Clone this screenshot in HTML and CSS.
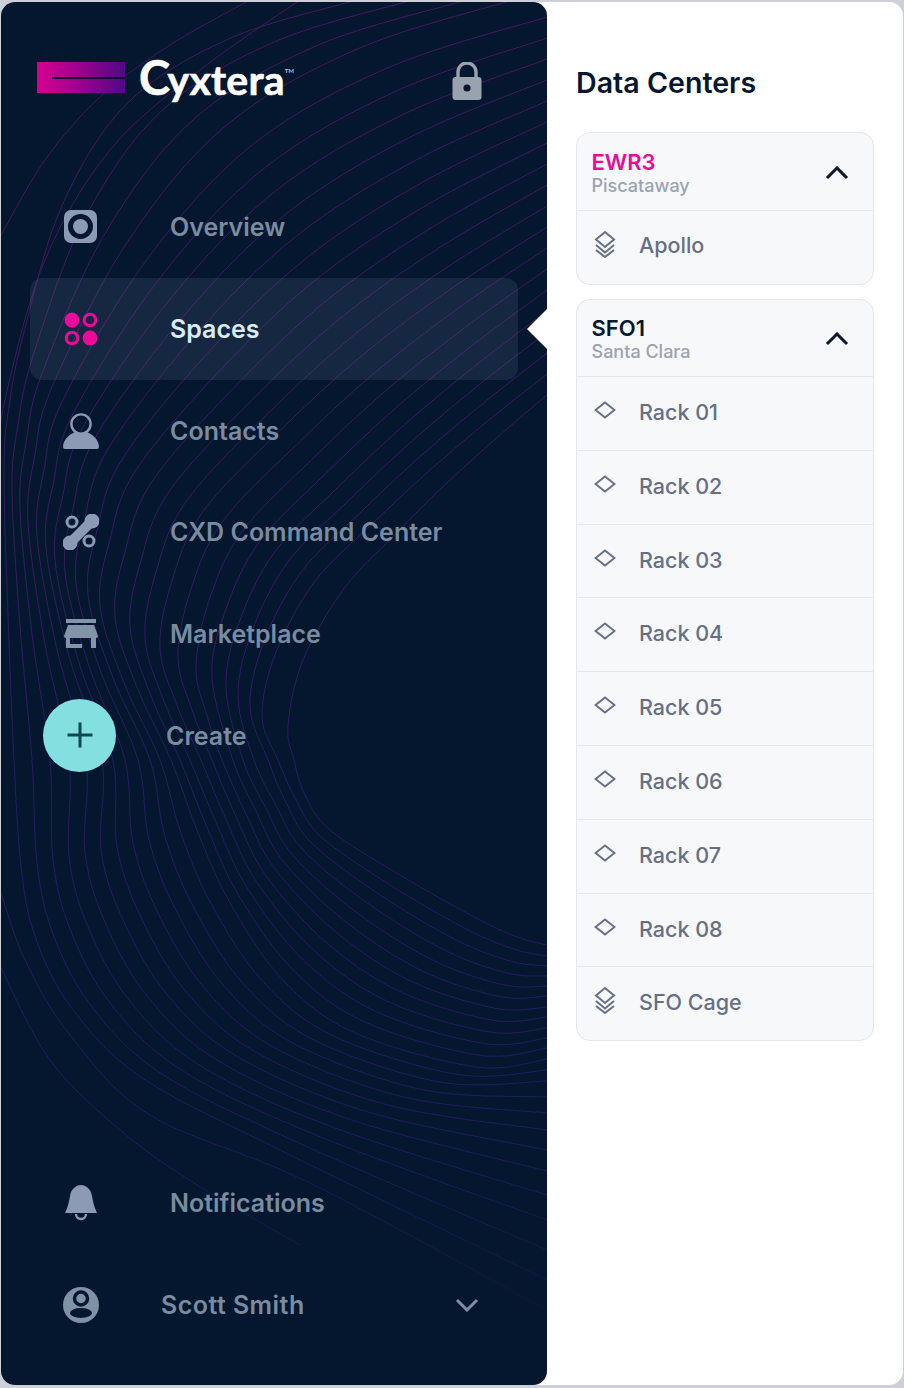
FILE: index.html
```html
<!DOCTYPE html>
<html lang="en">
<head>
<meta charset="utf-8">
<title>Cyxtera – Data Centers</title>
<link rel="stylesheet" href="styles.css">
</head>
<body>
<div class="app">
  <aside class="sidebar">
    <svg class="waves" width="546" height="1383" viewBox="1 2 546 1383" aria-hidden="true">
      <defs>
        <linearGradient id="waveStroke" gradientUnits="userSpaceOnUse" x1="0" y1="0" x2="0" y2="1300">
          <stop offset="0" stop-color="#45195c"/>
          <stop offset="0.42" stop-color="#381b5e"/>
          <stop offset="0.6" stop-color="#261d62"/>
          <stop offset="0.9" stop-color="#1d1e5c"/>
          <stop offset="1" stop-color="#0b1838"/>
        </linearGradient>
      </defs>
      <g id="waveLines" fill="none" stroke="url(#waveStroke)" stroke-width="1"></g>
    </svg>

    <header class="brand">
      <div class="logo">
        <span class="logo-mark"><span class="logo-slit"></span></span>
        <span class="logo-word"><span class="logo-initial">C</span>yxtera<sup class="logo-tm">TM</sup></span>
      </div>
      <svg class="lock" width="30" height="38" viewBox="0 0 30 38">
        <path d="M6 17V10a9 9 0 0 1 18 0v7" fill="none" stroke="#9aa1af" stroke-width="3.4"/>
        <rect x="0.5" y="15" width="29" height="23" rx="3" fill="#9aa1af"/>
        <circle cx="15" cy="26" r="3.6" fill="#05162f"/>
      </svg>
    </header>

    <nav class="nav">
      <a class="nav-item">
        <svg class="nav-icon" width="36" height="36" viewBox="0 0 36 36"><rect x="1" y="1" width="33" height="33" rx="7" fill="#8c9ab5"/><circle cx="17.5" cy="17.5" r="12.5" fill="#05162f"/><circle cx="17.5" cy="17.5" r="7.5" fill="#8c9ab5"/></svg>
        <span class="nav-label">Overview</span>
      </a>
      <a class="nav-item is-active">
        <svg class="nav-icon" width="36" height="36" viewBox="0 0 36 36"><circle cx="9" cy="9" r="7.4" fill="#ec0a9b"/><circle cx="27" cy="9" r="5.8" fill="none" stroke="#ec0a9b" stroke-width="3"/><circle cx="9" cy="27" r="5.8" fill="none" stroke="#ec0a9b" stroke-width="3"/><circle cx="27" cy="27" r="7.4" fill="#ec0a9b"/></svg>
        <span class="nav-label">Spaces</span>
      </a>
      <a class="nav-item">
        <svg class="nav-icon" width="36" height="36" viewBox="0 0 36 36"><circle cx="18" cy="11" r="9.6" fill="none" stroke="#8c9ab5" stroke-width="2.4"/><path d="M2 36a2 2 0 0 1-2-2C0 26 8 20 13 19c3 2 7 2 10 0C28 20 36 26 36 34a2 2 0 0 1-2 2Z" fill="#8c9ab5"/></svg>
        <span class="nav-label">Contacts</span>
      </a>
      <a class="nav-item">
        <svg class="nav-icon" width="36" height="36" viewBox="0 0 36 36"><path d="M7 29 29 7" stroke="#8c9ab5" stroke-width="10"/><circle cx="7" cy="29" r="7.5" fill="#8c9ab5"/><circle cx="29" cy="7" r="7.5" fill="#8c9ab5"/><circle cx="9" cy="8" r="5" fill="none" stroke="#8c9ab5" stroke-width="3"/><circle cx="26" cy="27" r="5" fill="none" stroke="#8c9ab5" stroke-width="3"/></svg>
        <span class="nav-label">CXD Command Center</span>
      </a>
      <a class="nav-item">
        <svg class="nav-icon" width="36" height="36" viewBox="0 0 36 36"><rect x="3" y="3" width="30" height="4" fill="#8494a8"/><path d="M5 9h26l4 11a2 2 0 0 1-2 2H3a2 2 0 0 1-2-2Z" fill="#8494a8"/><path d="M3 21h4v7h12v4H3ZM28 21h5v11h-5Z" fill="#8494a8"/></svg>
        <span class="nav-label">Marketplace</span>
      </a>
      <a class="nav-item nav-create">
        <span class="create-btn">
          <svg class="create-plus" width="28" height="28" viewBox="0 0 28 28"><path d="M14 1.500v25M1.500 14h25" stroke="#0b4b50" stroke-width="3"/></svg>
        </span>
        <span class="nav-label">Create</span>
      </a>
    </nav>

    <div class="nav nav-bottom">
      <a class="nav-item">
        <svg class="nav-icon" width="36" height="36" viewBox="0 0 36 36"><path d="M2 28C5 22 6 16 7 11 8 4 13 0 18 0 23 0 28 4 29 11 30 16 31 22 34 28Z" fill="#8c9ab5"/><path d="M13 29a5 5 0 0 0 10 0" fill="none" stroke="#8c9ab5" stroke-width="2.400"/></svg>
        <span class="nav-label">Notifications</span>
      </a>
      <a class="nav-item nav-user">
        <svg class="nav-icon" width="36" height="36" viewBox="0 0 36 36"><circle cx="18" cy="18" r="18" fill="#8092a6"/><circle cx="18" cy="11.500" r="6.500" fill="none" stroke="#05162f" stroke-width="3.500"/><ellipse cx="18" cy="26" rx="11" ry="5" fill="#05162f"/></svg>
        <span class="nav-label">Scott Smith</span>
        <svg class="user-caret" width="24" height="14" viewBox="0 0 24 14"><path d="M2 2l10 10L22 2" fill="none" stroke="#7f8ea3" stroke-width="3"/></svg>
      </a>
    </div>
  </aside>

  <main class="panel">
    <h1 class="panel-title">Data Centers</h1>

    <section class="card">
      <header class="card-head">
        <div class="card-names">
          <div class="card-code is-selected">EWR3</div>
          <div class="card-city">Piscataway</div>
        </div>
        <svg class="card-chevron" width="24" height="14" viewBox="0 0 24 14"><path d="M2 12 12 2l10 10" fill="none" stroke="#05162f" stroke-width="3"/></svg>
      </header>
      <div class="row row-cage">
        <svg class="row-icon" width="22" height="28" viewBox="0 0 22 28"><path d="M11 2l9 7.500-9 7.500-9-7.500Z" fill="none" stroke="#667085" stroke-width="2"/><path d="M2 15l9 7.500 9-7.500M2 20l9 7 9-7" fill="none" stroke="#667085" stroke-width="2"/></svg>
        <span class="row-label">Apollo</span>
      </div>
    </section>

    <section class="card">
      <header class="card-head">
        <div class="card-names">
          <div class="card-code">SFO1</div>
          <div class="card-city">Santa Clara</div>
        </div>
        <svg class="card-chevron" width="24" height="14" viewBox="0 0 24 14"><path d="M2 12 12 2l10 10" fill="none" stroke="#05162f" stroke-width="3"/></svg>
      </header>
      <div class="row"><svg class="row-icon" width="22" height="18" viewBox="0 0 22 18"><path d="M11 1.500l9.500 7.500-9.500 7.500L1.500 9Z" fill="none" stroke="#667085" stroke-width="2"/></svg><span class="row-label">Rack 01</span></div>
      <div class="row"><svg class="row-icon" width="22" height="18" viewBox="0 0 22 18"><path d="M11 1.500l9.500 7.500-9.500 7.500L1.500 9Z" fill="none" stroke="#667085" stroke-width="2"/></svg><span class="row-label">Rack 02</span></div>
      <div class="row"><svg class="row-icon" width="22" height="18" viewBox="0 0 22 18"><path d="M11 1.500l9.500 7.500-9.500 7.500L1.500 9Z" fill="none" stroke="#667085" stroke-width="2"/></svg><span class="row-label">Rack 03</span></div>
      <div class="row"><svg class="row-icon" width="22" height="18" viewBox="0 0 22 18"><path d="M11 1.500l9.500 7.500-9.500 7.500L1.500 9Z" fill="none" stroke="#667085" stroke-width="2"/></svg><span class="row-label">Rack 04</span></div>
      <div class="row"><svg class="row-icon" width="22" height="18" viewBox="0 0 22 18"><path d="M11 1.500l9.500 7.500-9.500 7.500L1.500 9Z" fill="none" stroke="#667085" stroke-width="2"/></svg><span class="row-label">Rack 05</span></div>
      <div class="row"><svg class="row-icon" width="22" height="18" viewBox="0 0 22 18"><path d="M11 1.500l9.500 7.500-9.500 7.500L1.500 9Z" fill="none" stroke="#667085" stroke-width="2"/></svg><span class="row-label">Rack 06</span></div>
      <div class="row"><svg class="row-icon" width="22" height="18" viewBox="0 0 22 18"><path d="M11 1.500l9.500 7.500-9.500 7.500L1.500 9Z" fill="none" stroke="#667085" stroke-width="2"/></svg><span class="row-label">Rack 07</span></div>
      <div class="row"><svg class="row-icon" width="22" height="18" viewBox="0 0 22 18"><path d="M11 1.500l9.500 7.500-9.500 7.500L1.500 9Z" fill="none" stroke="#667085" stroke-width="2"/></svg><span class="row-label">Rack 08</span></div>
      <div class="row row-cage">
        <svg class="row-icon" width="22" height="28" viewBox="0 0 22 28"><path d="M11 2l9 7.500-9 7.500-9-7.500Z" fill="none" stroke="#667085" stroke-width="2"/><path d="M2 15l9 7.500 9-7.500M2 20l9 7 9-7" fill="none" stroke="#667085" stroke-width="2"/></svg>
        <span class="row-label">SFO Cage</span>
      </div>
    </section>
  </main>
</div>
<script src="waves.js"></script>
</body>
</html>
```

FILE: styles.css
```css
* { box-sizing: border-box; }

html, body { height: 100%; }

body {
  margin: 0;
  background: #cdd0d9;
  font-family: Inter, "Liberation Sans", sans-serif;
  overflow: hidden;
}

.app {
  display: flex;
  height: 1383px;
  margin: 2px 1px 3px 1px;
  background: #fff;
  border-radius: 14px;
}

/* Sidebar */
.sidebar {
  position: relative;
  display: flex;
  flex-direction: column;
  width: 546px;
  flex: none;
  padding-bottom: 29px;
  background: #05162f;
  border-radius: 14px;
}

.waves {
  position: absolute;
  inset: 0;
  border-radius: 14px;
}

.brand {
  position: relative;
  display: flex;
  align-items: flex-start;
  justify-content: space-between;
  height: 174.500px;
  padding: 58px 65px 0 36px;
}

.logo {
  display: flex;
  align-items: flex-start;
  gap: 14px;
}

.logo-mark {
  display: block;
  position: relative;
  width: 88px;
  height: 31px;
  margin-top: 2px;
  background: linear-gradient(90deg, #d6008f 0%, #a8008e 40%, #4f0a86 100%);
}

.logo-slit {
  position: absolute;
  left: 15px;
  right: 0;
  top: 15px;
  height: 1.500px;
  background: #1a0a3c;
}

.logo-word {
  margin-top: -3px;
  font-family: Lato, "Liberation Sans", sans-serif;
  font-weight: 700;
  font-size: 41px;
  line-height: 40px;
  letter-spacing: 0.2px;
  color: #fff;
  -webkit-text-stroke: 0.6px #fff;
}

.logo-initial {
  font-size: 47px;
  letter-spacing: -2.5px;
}

.logo-tm {
  font-size: 6px;
  line-height: 0;
  letter-spacing: 0;
  vertical-align: 22px;
  color: #b9bfca;
  -webkit-text-stroke: 0;
}

.lock { margin-top: 2px; }

.nav {
  position: relative;
  display: flex;
  flex-direction: column;
  margin: 0 29px;
}

.nav-bottom { margin-top: auto; }

.nav-item {
  display: flex;
  align-items: center;
  gap: 71px;
  position: relative;
  height: 101.700px;
  padding-left: 33px;
  border-radius: 12px;
  color: #7a8ca0;
}

.nav-icon { flex: none; }

.nav-label {
  font-size: 25px;
  font-weight: 600;
  line-height: 30px;
}

.is-active {
  background: rgba(190, 210, 255, 0.09);
  color: #d8ecf2;
}

.is-active::after {
  content: "";
  position: absolute;
  top: 30px;
  right: -30px;
  border-style: solid;
  border-width: 21px 21px 21px 0;
  border-color: transparent #fff transparent transparent;
}

.nav-create {
  gap: 50px;
  padding-left: 13px;
}

.create-btn {
  display: flex;
  align-items: center;
  justify-content: center;
  width: 73px;
  height: 73px;
  border-radius: 50%;
  background: #84dfe0;
}

.create-plus { margin-top: -1px; }

.nav-user { gap: 62px; }

.nav-user .nav-label { letter-spacing: 0.45px; }

.user-caret {
  margin-left: auto;
  margin-right: 39px;
}

/* Right panel */
.panel {
  flex: 1;
  padding: 63px 29px 0 29px;
}

.panel-title {
  margin: 0 0 32.400px;
  font-size: 28.600px;
  line-height: 35px;
  font-weight: 600;
  color: #05162f;
}

.card {
  margin-bottom: 14px;
  background: #f7f8fa;
  border: 1px solid #e5e7ec;
  border-radius: 14px;
}

.card-head {
  display: flex;
  align-items: center;
  justify-content: space-between;
  height: 76.400px;
  padding: 3px 24px 0 14.500px;
}

.card-code {
  font-size: 22px;
  line-height: 25px;
  font-weight: 600;
  color: #05162f;
}

.card-code.is-selected { color: #ec0a9b; }

.card-city {
  font-size: 18px;
  line-height: 21px;
  font-weight: 500;
  color: #9aa3b2;
}

.row {
  display: flex;
  align-items: flex-start;
  gap: 23px;
  height: 73.800px;
  padding: 24px 0 0 17px;
  border-top: 1px solid #e5e7ec;
}

.row-icon { flex: none; }

.row-cage { padding-top: 19px; }

.row-label {
  margin-top: -3px;
  font-size: 21.500px;
  line-height: 28px;
  font-weight: 500;
  color: #667085;
}

.row-cage .row-label { margin-top: 1.500px; }
```

FILE: waves.js
```js
// Draws the contour lines behind the sidebar from a few measured reference curves.
(function () {
  var xmin = [4,12,20,28,37,46,55,65,76,88,100,115,130,145,160,178,196,212,226,238,250,262,288];
  var x760 = [14,32,50,69,86,102,113,125,138,150,160,171,180,190,201,212,222,233,243,254,268,278,294];
  var exits = [945,956,966,976,986,996,1007,1017,1028,1038,1048,1059,1070,1081,1097,1113,1130,1150,1171,1195,1220,1250,1280];
  var left = [[21,866],[35,936],[71,1007],[141,1077],[280,1150]];
  var mid = [[197,830],[229,901],[282,979],[353,1032],[476,1067]];
  var right = [[305,795],[330,830],[400,875],[480,920],[520,938]];

  function lerp(a, b, t) { return a + (b - a) * t; }

  function start(r) {
    if (r <= 18) { return [547, 395 - r * 21]; }
    return [[513,0],[467,0],[413,0],[357,0]][r - 19];
  }

  function smooth(p) {
    var d = "M" + p[0][0].toFixed(1) + " " + p[0][1].toFixed(1);
    for (var i = 0; i < p.length - 1; i++) {
      var a = p[Math.max(i - 1, 0)], b = p[i], c = p[i + 1], e = p[Math.min(i + 2, p.length - 1)];
      d += "C" + (b[0] + (c[0] - a[0]) / 6).toFixed(1) + " " + (b[1] + (c[1] - a[1]) / 6).toFixed(1) +
           " " + (c[0] - (e[0] - b[0]) / 6).toFixed(1) + " " + (c[1] - (e[1] - b[1]) / 6).toFixed(1) +
           " " + c[0].toFixed(1) + " " + c[1].toFixed(1);
    }
    return d;
  }

  function addPath(d) {
    var el = document.createElementNS("http://www.w3.org/2000/svg", "path");
    el.setAttribute("d", d);
    document.getElementById("waveLines").appendChild(el);
  }

  for (var j = 0; j < 23; j++) {
    var r = 22 - j, u = j / 22, pts = [];
    var ymin = 470 + 255 * Math.pow(u, 0.8);
    var scale = 0.35 + 0.65 * u;
    var s = start(r);
    var e = [xmin[j] + 55 * scale, ymin - 135];
    var dx = e[0] - s[0], dy = e[1] - s[1], len = Math.sqrt(dx * dx + dy * dy);
    var bulge = (0.02 + 0.17 * (r / 22) * (r / 22)) * len;
    var nx = -Math.abs(dy) / len, ny = -Math.abs(dx) / len;
    [0, 0.25, 0.5, 0.75].forEach(function (a) {
      var b = Math.sin(Math.PI * a) * bulge;
      pts.push([lerp(s[0], e[0], a) + nx * b, lerp(s[1], e[1], a) + ny * b]);
    });
    pts.push(e);
    pts.push([xmin[j] + 15 * scale, ymin - 65]);
    pts.push([xmin[j], ymin]);
    if (760 - ymin > 90) {
      pts.push([lerp(xmin[j], x760[j], 0.4), (ymin + 760) / 2]);
    }
    pts.push([x760[j], 760]);
    for (var k = 0; k < 5; k++) {
      var q = u < 0.5
        ? [lerp(left[k][0], mid[k][0], u * 2), lerp(left[k][1], mid[k][1], u * 2)]
        : [lerp(mid[k][0], right[k][0], u * 2 - 1), lerp(mid[k][1], right[k][1], u * 2 - 1)];
      pts.push(q);
    }
    pts.push([547, exits[r]]);
    addPath(smooth(pts));
  }

  addPath(smooth([[250,0],[170,45],[100,97],[45,160],[0,237]]));
  addPath(smooth([[300,0],[200,70],[110,150],[45,260],[5,400],[-5,480]]));
  addPath(smooth([[0,890],[25,960],[70,1035],[150,1115],[310,1183],[547,1310]]));
  addPath(smooth([[0,966],[50,1060],[120,1130],[194,1183],[300,1245]]));
})();
```
